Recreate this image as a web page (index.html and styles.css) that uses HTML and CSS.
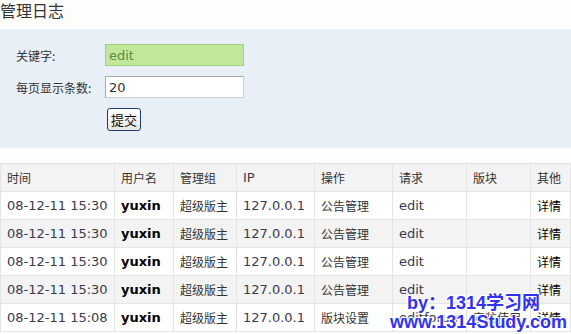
FILE: index.html
```html
<!DOCTYPE html>
<html lang="zh-CN">
<head>
    <meta charset="UTF-8">
    <title>管理日志</title>
    <link rel="stylesheet" href="styles.css">
</head>
<body>
    <h1 class="page-title">管理日志</h1>

    <form class="search-panel">
        <div class="form-row">
            <label>关键字:</label>
            <input type="text" class="keyword" value="edit">
        </div>
        <div class="form-row">
            <label>每页显示条数:</label>
            <input type="text" class="perpage" value="20">
        </div>
        <div class="form-row">
            <label></label>
            <button type="submit">提交</button>
        </div>
    </form>

    <table class="log-table">
        <thead>
            <tr>
                <th class="c-time">时间</th>
                <th class="c-user">用户名</th>
                <th class="c-group">管理组</th>
                <th class="c-ip">IP</th>
                <th class="c-op">操作</th>
                <th class="c-req">请求</th>
                <th class="c-forum">版块</th>
                <th class="c-other">其他</th>
            </tr>
        </thead>
        <tbody>
            <tr>
                <td class="num">08-12-11 15:30</td><td class="user">yuxin</td><td>超级版主</td><td class="num">127.0.0.1</td><td>公告管理</td><td class="num">edit</td><td></td><td class="more">详情</td>
            </tr>
            <tr>
                <td class="num">08-12-11 15:30</td><td class="user">yuxin</td><td>超级版主</td><td class="num">127.0.0.1</td><td>公告管理</td><td class="num">edit</td><td></td><td class="more">详情</td>
            </tr>
            <tr>
                <td class="num">08-12-11 15:30</td><td class="user">yuxin</td><td>超级版主</td><td class="num">127.0.0.1</td><td>公告管理</td><td class="num">edit</td><td></td><td class="more">详情</td>
            </tr>
            <tr>
                <td class="num">08-12-11 15:30</td><td class="user">yuxin</td><td>超级版主</td><td class="num">127.0.0.1</td><td>公告管理</td><td class="num">edit</td><td></td><td class="more">详情</td>
            </tr>
            <tr>
                <td class="num">08-12-11 15:08</td><td class="user">yuxin</td><td>超级版主</td><td class="num">127.0.0.1</td><td>版块设置</td><td class="num">editforum</td><td>安装使用</td><td class="more">详情</td>
            </tr>
        </tbody>
    </table>

    <div class="watermark">
        <span>by：1314学习网</span>
        <span>www.1314Study.com</span>
    </div>
</body>
</html>
```

FILE: styles.css
```css
body {
    margin: 0;
    background: #fdfdfb;
    color: #333;
    font-family: "DejaVu Sans", Verdana, "Noto Sans CJK SC", sans-serif;
    font-size: 13px;
}

.page-title {
    margin: 0;
    height: 29px;
    font-size: 16px;
    font-weight: normal;
    line-height: 20px;
    font-family: "Noto Sans CJK SC", sans-serif;
}

.search-panel {
    background: #e8eff7;
    padding: 15px 0 17px 16px;
    margin-bottom: 15px;
}

.form-row {
    display: flex;
    align-items: center;
    height: 22px;
    margin-bottom: 10px;
}

.form-row:last-child {
    margin-bottom: 0;
    height: 23px;
}

.form-row label {
    width: 89px;
    font-family: "Noto Sans CJK SC", sans-serif;
    font-size: 12px;
}

.form-row input {
    box-sizing: border-box;
    width: 139px;
    height: 22px;
    padding: 0 3px;
    font-family: "DejaVu Sans", Verdana, sans-serif;
    font-size: 13px;
    outline: none;
}

.keyword {
    background: #c2e69c;
    border: 1px solid #9fd27c;
    color: #5c8c3a;
}

.perpage {
    background: #fff;
    border: 1px solid #a8a8a8;
    border-right-color: #d0d0d0;
    border-bottom-color: #d0d0d0;
    color: #333;
}

.form-row button {
    margin-left: 2px;
    height: 23px;
    width: 34px;
    padding: 0;
    background: linear-gradient(#ffffff, #e6e6e0);
    border: 1px solid #1d3e6e;
    border-radius: 3px;
    font-family: "Noto Sans CJK SC", sans-serif;
    font-size: 13px;
    color: #111;
}

.log-table {
    width: 100%;
    border-collapse: collapse;
    table-layout: fixed;
}

.log-table th,
.log-table td {
    height: 27px;
    padding: 0 0 0 6px;
    border: 1px solid #e4e4e4;
    text-align: left;
    font-weight: normal;
    font-family: "Noto Sans CJK SC", sans-serif;
    font-size: 12px;
    white-space: nowrap;
    overflow: visible;
}

.log-table th {
    background: #f3f3f3;
}

.log-table tbody tr:nth-child(even) td {
    background: #f3f3f3;
}

.log-table tbody tr:nth-child(odd) td {
    background: #fff;
}

.log-table td.num,
.log-table th.c-ip {
    font-family: "DejaVu Sans", Verdana, sans-serif;
    font-size: 13px;
    color: #3a3a4e;
}

.log-table td.user {
    font-family: "DejaVu Sans", Verdana, sans-serif;
    font-weight: bold;
    font-size: 13px;
    color: #000;
}

.log-table td.more {
    color: #000;
}

.c-time { width: 107px; }
.c-user { width: 52px; }
.c-group { width: 56px; }
.c-ip { width: 71px; }
.c-op { width: 71px; }
.c-req { width: 67px; }
.c-forum { width: 57px; }

.watermark {
    position: absolute;
    left: 390px;
    top: 294px;
    display: flex;
    flex-direction: column;
    align-items: flex-start;
    font-family: "Liberation Sans", Arial, "Noto Sans CJK SC", sans-serif;
    font-weight: bold;
    font-size: 18px;
    color: #3333ee;
    line-height: 19px;
    text-shadow: 1px 1px 0 #fff, -1px -1px 0 #fff, 1px -1px 0 #fff, -1px 1px 0 #fff, 0 0 2px #fff;
}

.watermark span:first-child {
    margin-left: 17px;
}
```
